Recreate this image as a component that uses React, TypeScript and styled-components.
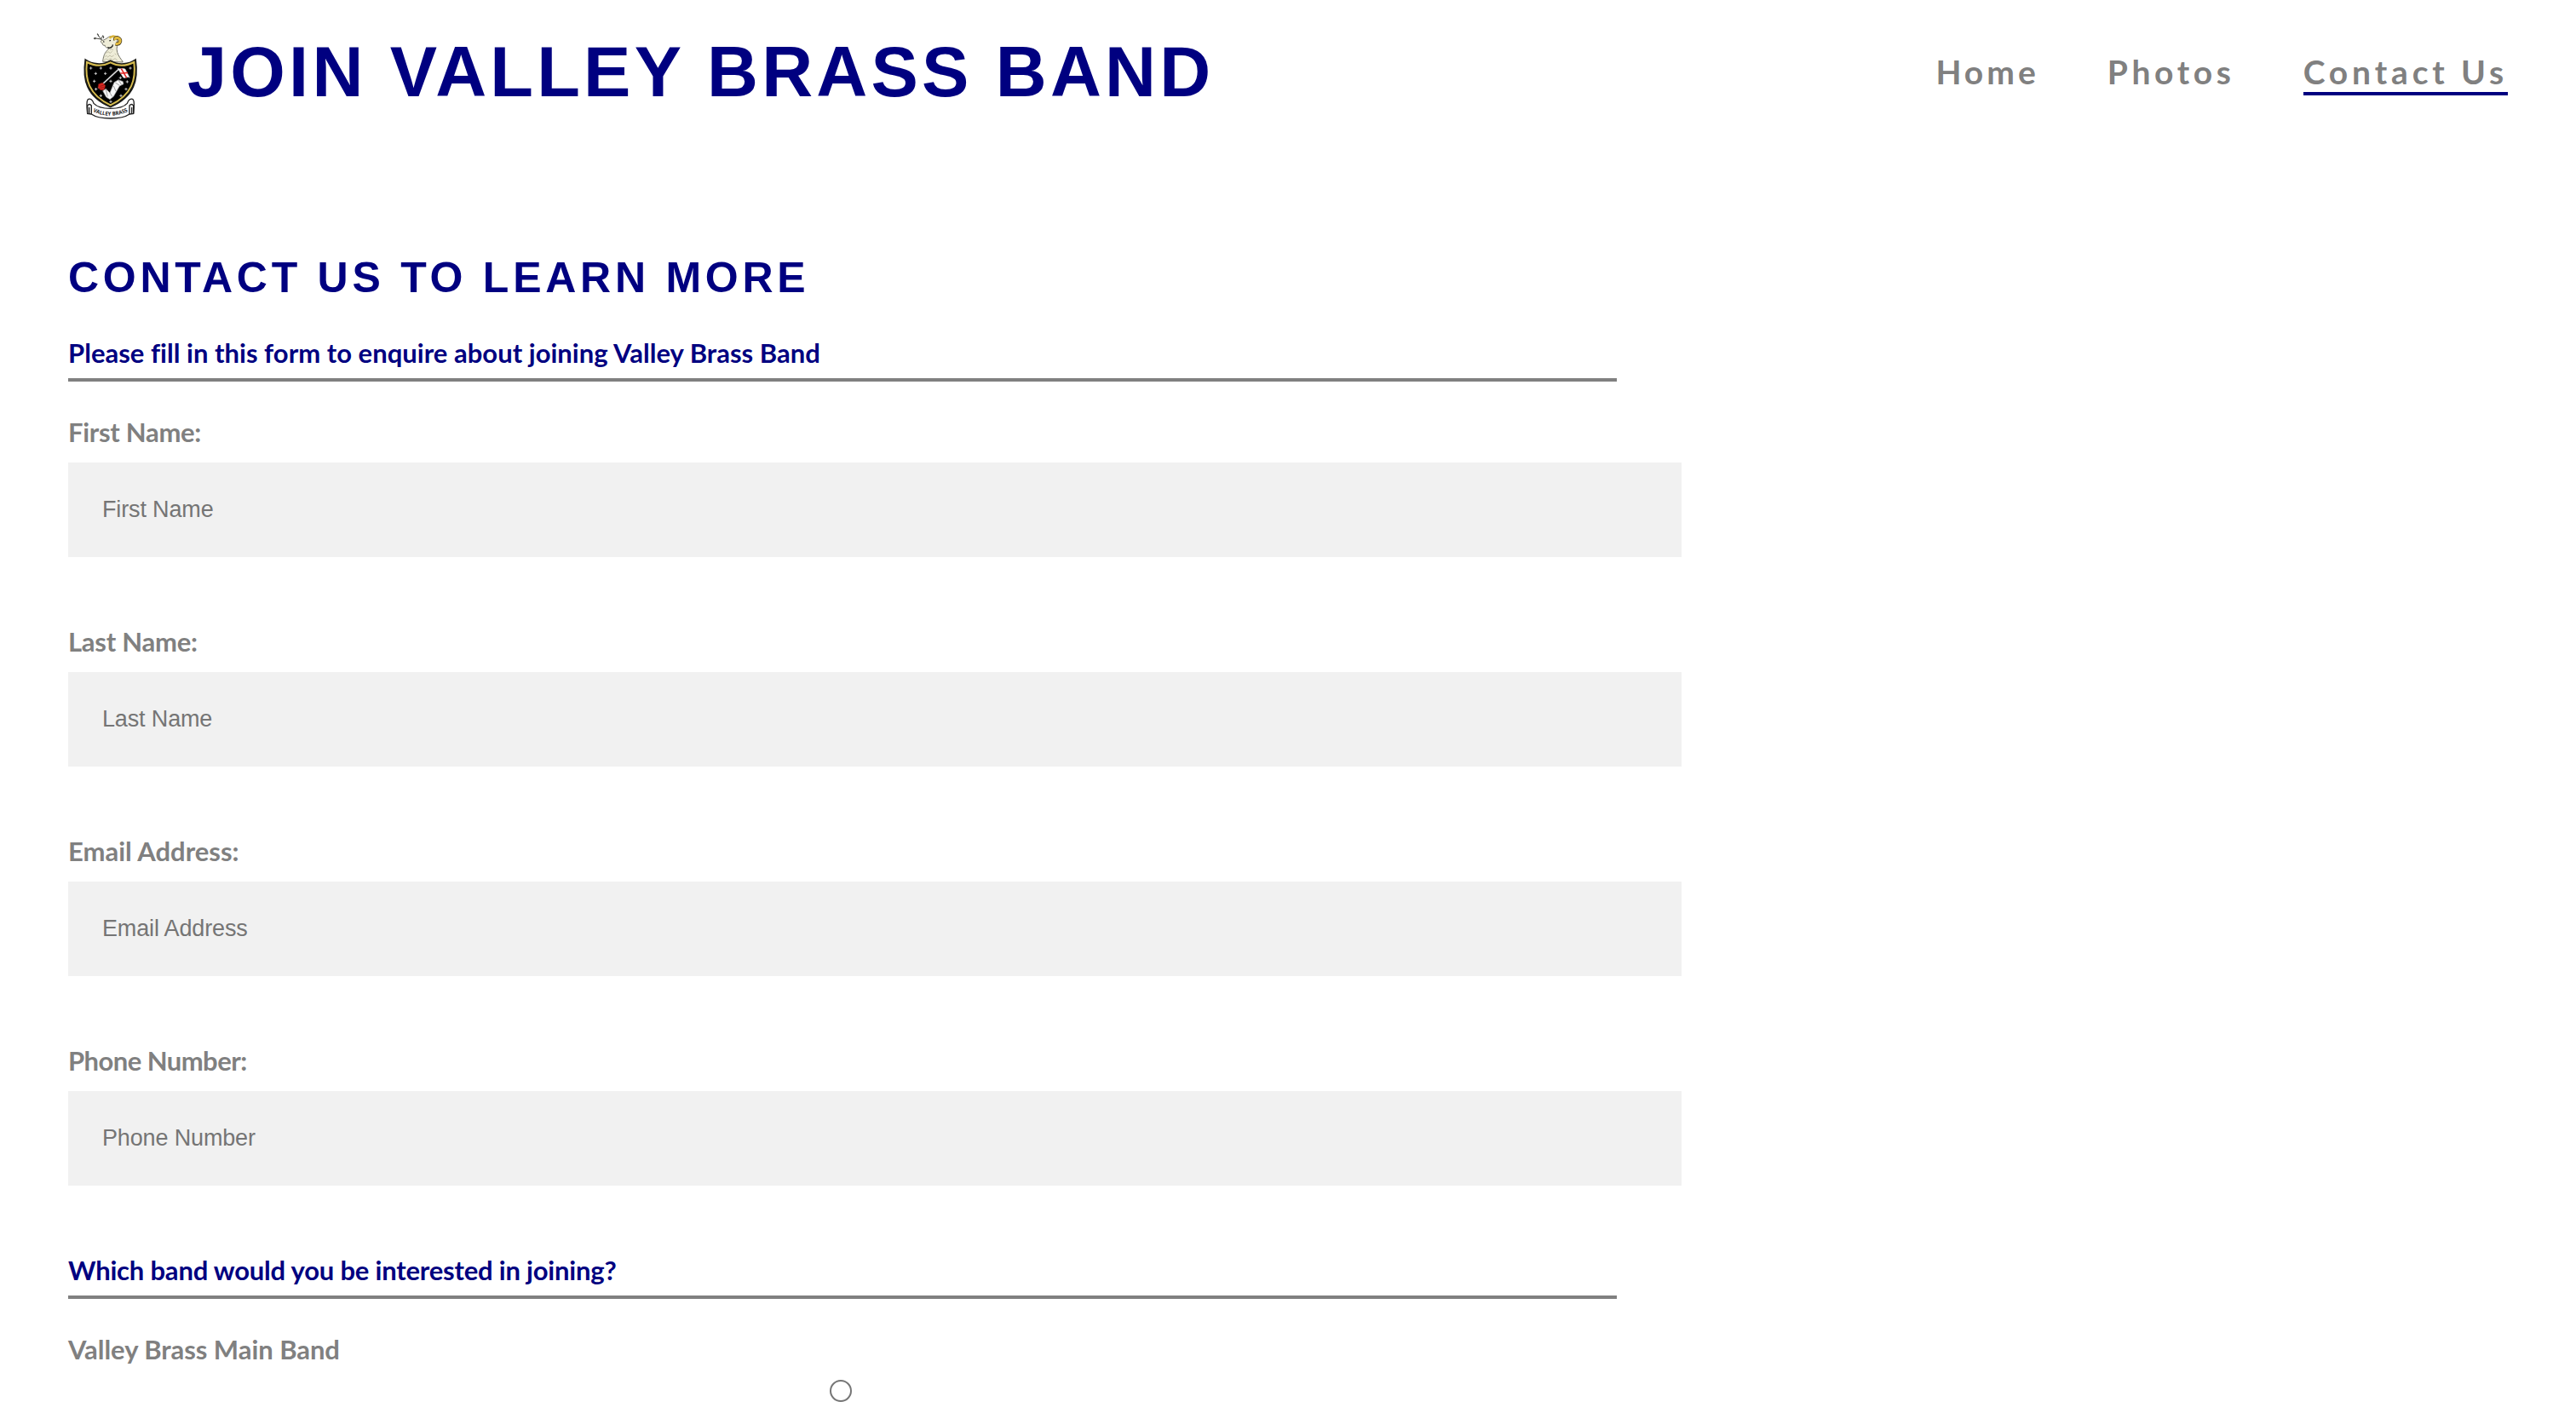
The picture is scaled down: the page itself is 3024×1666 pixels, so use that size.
import React from "react";
import styled, { createGlobalStyle } from "styled-components";

const navy = "#000080";
const grey = "#808080";
const humanist = `Lato, "Open Sans", sans-serif`;
const grotesque = `"Liberation Sans", Arial, sans-serif`;

const GlobalStyle = createGlobalStyle`
  * { box-sizing: border-box; }
  html { overflow: hidden; }
  body { margin: 0; background: #fff; font-family: ${humanist}; font-variant-ligatures: none; }
  h1, h2, p { margin: 0; }
`;

const Header = styled.header`
  display: flex;
  align-items: center;
  height: 170px;
  padding: 0 80px;
`;

const Crest = styled.svg`
  width: 120px;
  height: 130px;
  margin-right: 20px;
`;

const SiteTitle = styled.h1`
  color: ${navy};
  font: 700 83px/96px ${grotesque};
  letter-spacing: 4.2px;
  white-space: nowrap;
`;

const Nav = styled.nav`
  display: flex;
  gap: 80px;
  margin: 2px 0 0 auto;
`;

const NavLink = styled.a<{ $active?: boolean; $spacing: number }>`
  border-bottom: 4px solid ${(p) => (p.$active ? navy : "transparent")};
  color: ${grey};
  font-size: 39px;
  font-weight: 700;
  line-height: 48px;
  letter-spacing: ${(p) => p.$spacing}px;
  text-decoration: none;
  white-space: nowrap;
`;

const Main = styled.main`
  padding: 126px 80px 0;
  height: 1496px;
  overflow: hidden;
`;

const FormTitle = styled.h2`
  margin-bottom: 38px;
  color: ${navy};
  font: 700 50px/60px ${grotesque};
  letter-spacing: 4.75px;
`;

const Form = styled.form`
  display: flex;
  flex-direction: column;
  width: 1818px;
`;

const Prompt = styled.p<{ $spacing: number }>`
  margin-bottom: 39px;
  padding-bottom: 10px;
  border-bottom: 4px solid ${grey};
  color: ${navy};
  font-size: 31px;
  font-weight: 700;
  line-height: 40px;
  letter-spacing: ${(p) => p.$spacing}px;
`;

const Field = styled.div`
  display: flex;
  flex-direction: column;
  gap: 16px;
  margin-bottom: 79px;
`;

const Label = styled.label<{ $spacing: number }>`
  color: ${grey};
  font-size: 31px;
  font-weight: 700;
  line-height: 40px;
  letter-spacing: ${(p) => p.$spacing}px;
`;

const TextInput = styled.input`
  width: 1894px;
  height: 111px;
  padding: 0 40px 1px;
  border: 0;
  border-radius: 0;
  background: #f1f1f1;
  font: 27px ${grotesque};
  letter-spacing: -0.15px;
  &::placeholder { color: #757575; opacity: 1; }
`;

const Radio = styled.input`
  appearance: none;
  align-self: center;
  width: 26px;
  height: 26px;
  margin: 0 0 0 -4px;
  border: 2px solid #767676;
  border-radius: 50%;
`;

const stars = [[80, 180], [115, 180], [150, 180], [219, 180], [97, 199], [131, 199], [184, 214], [92, 226], [150, 226], [208, 228], [98, 254], [204, 254], [115, 277], [186, 277], [150, 298]];

const ValleyCrest = () => (
  <Crest viewBox="0 0 360 390">
    <g stroke="#4a4a44" fill="none" strokeWidth="3" strokeLinecap="round">
      <path d="M127 88 L116 78 L107 66 M116 78 L98 75 M116 78 L122 66" />
      <path d="M107 66 q-6 -4 -4 -7 q5 2 4 7 M98 75 q-5 -5 -8 1 q4 4 8 -1 M122 66 q6 1 3 8" fill="#777" />
    </g>
    <path d="M122 157 C124 132 133 119 146 110 C136 110 128 104 130 100 C124 101 119 97 121 92 C114 91 113 83 119 82 C128 82 134 76 143 70 C155 64 172 70 174 84 C176 98 168 108 173 124 C177 139 188 149 193 159 Z" fill="#efedd8" stroke="#77766a" strokeWidth="3" />
    <path d="M139 107 C150 112 158 103 157 97 M145 84 l5 -2 M124 88 l3 -2" fill="none" stroke="#222" strokeWidth="4" />
    <path d="M128 141 l6 -5 l6 5 l7 -6 l6 5 l8 -5 M134 127 l7 -5 l7 5 l7 -6 M126 152 l8 -5 l7 4 l8 -5 l8 5 l8 -5 l8 6 M147 116 l6 -3 l6 4 M164 129 l6 4" fill="none" stroke="#aaa890" strokeWidth="2" />
    <path d="M146 74 C154 65 164 66 170 73" fill="none" stroke="#d9b43a" strokeWidth="7" />
    <path d="M167 94 C182 98 188 82 178 75 C170 70 164 75 166 81" fill="none" stroke="#3c3520" strokeWidth="13" />
    <path d="M167 94 C182 98 188 82 178 75 C170 70 164 75 166 81" fill="none" stroke="#e3ba3c" strokeWidth="9" />
    <path d="M61 151 C84 167 121 172 149 154 C177 172 214 167 237 151 C247 219 234 280 149 316 C64 280 51 219 61 151 Z" fill="#000" stroke="#1c1c18" strokeWidth="6" />
    <path d="M66 159 C92 172 123 174 149 160 C175 174 206 172 232 159 C239 218 226 275 149 310 C72 275 59 218 66 159 Z" fill="#000" stroke="#d7bd50" strokeWidth="6" />
    <g stroke="#ddd" strokeWidth="2.5">
      {stars.map(([x, y]) => <path key={`${x}-${y}`} d={`M${x - 5} ${y} h10 M${x} ${y - 5} v10`} />)}
    </g>
    <path d="M106 250 L180 182" stroke="#d4d4d4" strokeWidth="5" />
    <path d="M174 181 C184 185 190 177 201 183 L217 214 C209 207 203 219 194 213 Z" fill="#fff" stroke="#bbb" strokeWidth="1.5" />
    <path d="M187 182 L206 214 M184 198 L210 196" stroke="#e32b28" strokeWidth="5" />
    <path d="M107 236 L121 231 L131 241 L127 257 L114 257 L105 248 Z" fill="#d8261f" stroke="#6d1510" strokeWidth="2" />
    <path d="M111 244 L126 240 M112 250 L126 248" stroke="#7e1713" strokeWidth="2" />
    <path d="M122 260 L133 253 L147 267 L162 230 L177 221 L193 227 L195 236 L181 243 L160 280 L147 290 L134 282 Z" fill="#f7f7f7" stroke="#999" strokeWidth="2" />
    <path d="M133 255 L139 280 M147 267 L155 280 M166 231 L181 241 M177 222 L188 238 M160 243 l8 18" fill="none" stroke="#777" strokeWidth="2" />
    <path d="M69 291 C76 284 87 292 90 304 C112 328 186 328 208 304 C211 292 222 284 229 291 C235 300 231 307 232 318 L230 340 L216 342 C188 362 110 362 82 342 L68 340 L66 318 C67 307 63 300 69 291 Z" fill="#fff" stroke="#222" strokeWidth="4" />
    <path d="M68 340 V312 Q75 303 82 312 V342 M74 340 V318 M230 340 V312 Q223 303 216 312 V342 M224 340 V318" fill="none" stroke="#222" strokeWidth="4" />
    <path id="motto" d="M87 333 Q149 363 213 331" fill="none" />
    <text fontFamily="Open Sans, sans-serif" fontSize="19" fontWeight="700" fill="#222">
      <textPath href="#motto" textLength="128" lengthAdjust="spacingAndGlyphs">VALLEY BRASS</textPath>
    </text>
  </Crest>
);

const links = [
  { text: "Home", spacing: 4 },
  { text: "Photos", spacing: 4.65 },
  { text: "Contact Us", spacing: 4.85, active: true },
];

const fields = [
  { text: "First Name", spacing: -0.3 },
  { text: "Last Name", spacing: -0.25 },
  { text: "Email Address", spacing: 0 },
  { text: "Phone Number", spacing: -0.55 },
];

export default function App() {
  return (
    <>
      <GlobalStyle />
      <Header>
        <ValleyCrest />
        <SiteTitle>JOIN VALLEY BRASS BAND</SiteTitle>
        <Nav>
          {links.map((l) => (
            <NavLink key={l.text} $spacing={l.spacing} $active={l.active}>{l.text}</NavLink>
          ))}
        </Nav>
      </Header>
      <Main>
        <FormTitle>CONTACT US TO LEARN MORE</FormTitle>
        <Form>
          <Prompt $spacing={0.02}>Please fill in this form to enquire about joining Valley Brass Band</Prompt>
          {fields.map((f) => (
            <Field key={f.text}>
              <Label $spacing={f.spacing}>{f.text}:</Label>
              <TextInput placeholder={f.text} />
            </Field>
          ))}
          <Prompt $spacing={-0.2}>Which band would you be interested in joining?</Prompt>
          <Field>
            <Label $spacing={-0.05}>Valley Brass Main Band</Label>
            <Radio type="radio" />
          </Field>
        </Form>
      </Main>
    </>
  );
}
